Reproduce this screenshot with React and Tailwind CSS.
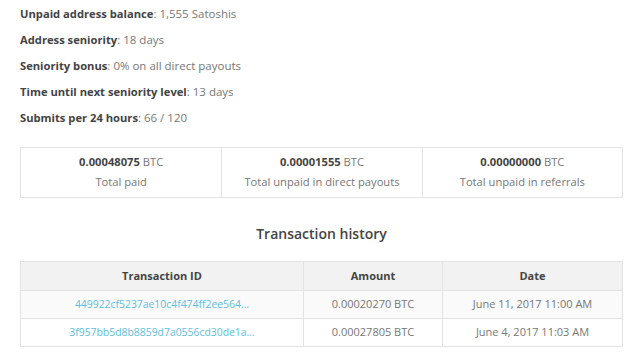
export default function App() {
  const stats = [
    ["Unpaid address balance", "1,555 Satoshis"],
    ["Address seniority", "18 days"],
    ["Seniority bonus", "0% on all direct payouts"],
    ["Time until next seniority level", "13 days"],
    ["Submits per 24 hours", "66 / 120"],
  ];

  const totals = [
    ["0.00048075", "Total paid"],
    ["0.00001555", "Total unpaid in direct payouts"],
    ["0.00000000", "Total unpaid in referrals"],
  ];

  const txs = [
    ["449922cf5237ae10c4f474ff2ee564...", "0.00020270 BTC", "June 11, 2017 11:00 AM"],
    ["3f957bb5d8b8859d7a0556cd30de1a...", "0.00027805 BTC", "June 4, 2017 11:03 AM"],
  ];

  return (
    <div className="min-h-screen bg-white px-5 text-[11px] text-[#777] font-['Open_Sans',sans-serif]">
      {/* STATS */}
      <div className="pt-px text-[11.5px]">
        {stats.map(([label, value]) => (
          <p key={label} className="leading-[26px]">
            <span className="font-bold text-[11.2px] text-[#444]">{label}</span>: {value}
          </p>
        ))}
      </div>

      {/* TOTALS */}
      <div className="mt-[16px] grid grid-cols-3 border border-[#e3e3e3] w-[603px] text-[11.2px]">
        {totals.map(([amount, label], i) => (
          <div
            key={label}
            className={`text-center pt-[5px] pb-[4px] ${i > 0 ? "border-l border-[#e3e3e3]" : ""}`}
          >
            <p className="leading-[18px]">
              <span className="font-bold text-[#444]">{amount}</span> BTC
            </p>
            <p className="leading-[22px]">{label}</p>
          </div>
        ))}
      </div>

      {/* HISTORY */}
      <h2 className="mt-[26px] w-[603px] text-center text-[14px] font-semibold text-[#444] leading-[20px]">
        Transaction history
      </h2>

      <table className="mt-[17px] w-[603px] border-collapse border border-[#e3e3e3] text-center">
        <thead>
          <tr className="bg-[#f2f2f2] h-[29px]">
            <th className="w-[283px] border border-[#e3e3e3] font-bold text-[#444]">Transaction ID</th>
            <th className="w-[139px] border border-[#e3e3e3] font-bold text-[#444]">Amount</th>
            <th className="border border-[#e3e3e3] font-bold text-[#444]">Date</th>
          </tr>
        </thead>
        <tbody>
          {txs.map(([id, amount, date], i) => (
            <tr key={id} className={`h-[28px] ${i % 2 === 0 ? "bg-[#fafafa]" : "bg-white"}`}>
              <td className="border border-[#e3e3e3] text-[10.4px] text-[#5bc0de]">{id}</td>
              <td className="border border-[#e3e3e3]">{amount}</td>
              <td className="border border-[#e3e3e3]">{date}</td>
            </tr>
          ))}
        </tbody>
      </table>
    </div>
  );
}
